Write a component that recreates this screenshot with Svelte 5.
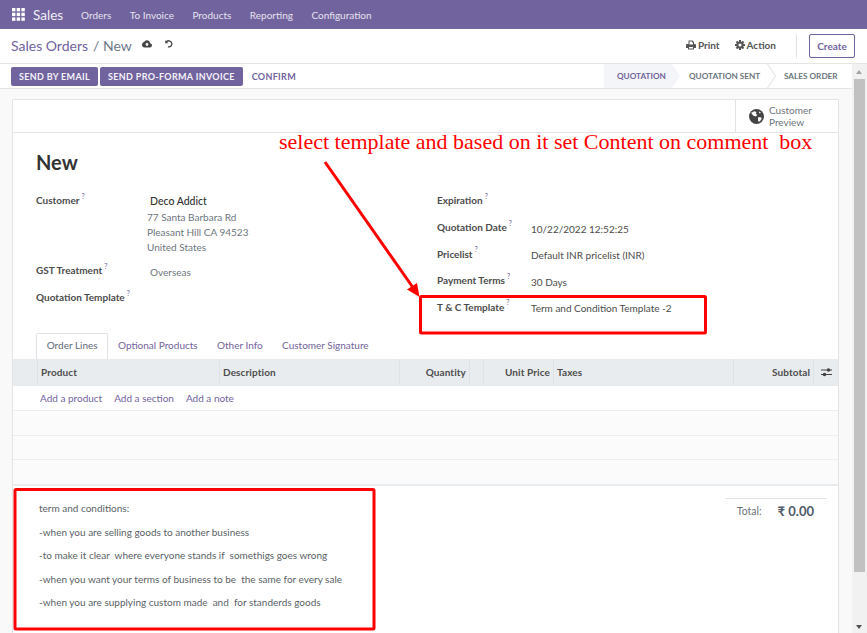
<script>
  const menu = ['Orders', 'To Invoice', 'Products', 'Reporting', 'Configuration'];
  const tabs = ['Order Lines', 'Optional Products', 'Other Info', 'Customer Signature'];
  const notes = [
    'term and conditions:',
    '-when you are selling goods to another business',
    '-to make it clear  where everyone stands if  somethigs goes wrong',
    '-when you want your terms of business to be  the same for every sale',
    '-when you are supplying custom made  and  for standerds goods'
  ];
  const teeth = [0, 45, 90, 135, 180, 225, 270, 315];
</script>

<div class="page">
  <header class="navbar">
    <svg class="apps" width="13" height="13" viewBox="0 0 13 13" fill="#fff">
      {#each [0, 4.7, 9.4] as y}
        {#each [0, 4.7, 9.4] as x}
          <rect {x} {y} width="3.4" height="3.4" />
        {/each}
      {/each}
    </svg>
    <span class="brand">Sales</span>
    {#each menu as item}
      <span class="menu-item">{item}</span>
    {/each}
  </header>

  <div class="control">
    <div class="crumbs">
      <span class="crumb-link">Sales Orders</span>
      <span class="crumb-sep">/ New</span>
      <svg class="save" width="10" height="8" viewBox="0 0 20 16">
        <path fill="#444" d="M16.2 6.6C15.7 2.9 13 0.5 10 0.5 7.500 0.5 5.400 2 4.500 4.200 2 4.600 0 6.800 0 9.500 0 12.700 2.300 15 5 15h11c2.300 0 4-1.900 4-4.300 0-2.200-1.600-3.900-3.800-4.100zM11.500 9v3h-3V9H6l4-4.200L14 9z" />
      </svg>
      <svg class="undo" width="9" height="9" viewBox="0 0 18 18" fill="none" stroke="#444" stroke-width="2.600">
        <path d="M4 7.500A6 6 0 1 1 8 15.500" />
        <path d="M2.500 2.500v6h6" fill="#444" stroke="none" />
      </svg>
    </div>
    <div class="actions">
      <span class="action">
        <svg width="10" height="10" viewBox="0 0 20 20">
          <path fill="#555" d="M5 1h8l3 3v4h2a2 2 0 0 1 2 2v6h-4v3H4v-3H0v-6a2 2 0 0 1 2-2h3zm2 2v6h7V5h-2V3zM6 14v3h8v-3z" fill-rule="evenodd" />
        </svg>
        Print
      </span>
      <span class="action">
        <svg width="10" height="10" viewBox="0 0 20 20" fill="#555">
          {#each teeth as a}
            <rect x="8" y="0" width="4" height="5" transform="rotate({a} 10 10)" />
          {/each}
          <circle cx="10" cy="10" r="5.200" fill="none" stroke="#555" stroke-width="4" />
        </svg>
        Action
      </span>
      <span class="divider"></span>
      <span class="create">Create</span>
    </div>
  </div>

  <div class="body">
    <div class="scroll">
      <div class="statusbar">
        <div class="buttons">
          <span class="btn">SEND BY EMAIL</span>
          <span class="btn">SEND PRO-FORMA INVOICE</span>
          <span class="btn-plain">CONFIRM</span>
        </div>
        <div class="stages">
          <span class="stage active">QUOTATION</span>
          <span class="stage second">
            QUOTATION SENT
            <svg class="chevron" width="9" height="24" viewBox="0 0 9 24" fill="none" stroke="#dcdfe3">
              <path d="M0.500 0L8.500 12 0.500 24" />
            </svg>
          </span>
          <span class="stage third">SALES ORDER</span>
        </div>
      </div>

      <div class="sheet">
        <div class="button-box">
          <div class="preview">
            <svg width="15" height="15" viewBox="0 0 20 20">
              <circle cx="10" cy="10" r="10" fill="#444" />
              <path fill="#fff" d="M3 5l4-2 3 1-1 2 2 2-2 2-3-1-2-2zM12 11l4 0 1 2-3 4-2-1zM13 3l3 2-2 1z" />
            </svg>
            <span>Customer<br />Preview</span>
          </div>
        </div>

        <h1 class="title">New</h1>

        <div class="groups">
          <div class="group left">
            <div class="row r-customer">
              <span class="label">Customer<sup>?</sup></span>
              <div class="value">
                <strong class="partner">Deco Addict</strong>
                <div class="address">77 Santa Barbara Rd<br />Pleasant Hill CA 94523<br />United States</div>
              </div>
            </div>
            <div class="row r-gst">
              <span class="label">GST Treatment<sup>?</sup></span>
              <span class="value indent muted">Overseas</span>
            </div>
            <div class="row r-template">
              <span class="label">Quotation Template<sup>?</sup></span>
            </div>
          </div>
          <div class="group right">
            <div class="row r-exp"><span class="label">Expiration<sup>?</sup></span></div>
            <div class="row r-std"><span class="label">Quotation Date<sup>?</sup></span><span class="value dn">10/22/2022 12:52:25</span></div>
            <div class="row r-std"><span class="label">Pricelist<sup>?</sup></span><span class="value dn">Default INR pricelist (INR)</span></div>
            <div class="row r-std"><span class="label">Payment Terms<sup>?</sup></span><span class="value dn">30 Days</span></div>
            <div class="row r-std"><span class="label">T &amp; C Template<sup>?</sup></span><span class="value dn">Term and Condition Template -2</span></div>
          </div>
        </div>

        <div class="tabs">
          {#each tabs as tab, i}
            <span class="tab" class:current={i === 0}>{tab}</span>
          {/each}
        </div>

        <div class="thead">
          <span class="c-handle"></span>
          <span class="c-product">Product</span>
          <span class="c-desc">Description</span>
          <span class="c-qty">Quantity</span>
          <span class="c-gap"></span>
          <span class="c-price">Unit Price</span>
          <span class="c-taxes">Taxes</span>
          <span class="c-sub">Subtotal</span>
          <span class="c-opt">
            <svg width="11" height="9" viewBox="0 0 11 9" fill="#444">
              <rect x="0" y="1.500" width="11" height="1" />
              <rect x="0" y="6" width="11" height="1" />
              <circle cx="7.500" cy="2" r="1.800" />
              <circle cx="3.500" cy="6.500" r="1.800" />
            </svg>
          </span>
        </div>
        <div class="add-row">
          <span>Add a product</span><span>Add a section</span><span>Add a note</span>
        </div>
        <div class="empty-row"></div>
        <div class="empty-row"></div>
        <div class="empty-row last"></div>

        <div class="bottom">
          <div class="note">
            {#each notes as line}
              <p>{line}</p>
            {/each}
          </div>
          <div class="totals">
            <span class="total-label">Total:</span>
            <span class="total-value">₹ 0.00</span>
          </div>
        </div>
      </div>
    </div>

    <div class="scrollbar">
      <span class="arrow up"></span>
      <div class="thumb"></div>
      <span class="arrow down"></span>
    </div>
  </div>

  <span class="callout">select template and based on it set Content on comment  box</span>
  <svg class="overlay" width="867" height="633" viewBox="0 0 867 633" fill="none" stroke="#f00">
    <path d="M325 162L414 289" stroke-width="3" />
    <path d="M419.500 297L407 289.500 417 283z" fill="#f00" stroke="none" />
    <rect x="420.500" y="296.500" width="285" height="36.500" rx="1" stroke-width="3" />
    <rect x="15" y="489.500" width="359" height="139.500" rx="1" stroke-width="3" />
  </svg>
</div>

<style>
  :global(body) {
    margin: 0;
  }

  .page {
    position: relative;
    width: 867px;
    height: 633px;
    overflow: hidden;
    display: flex;
    flex-direction: column;
    background: #fff;
    color: #4c4c4c;
    font-family: Lato, "Noto Sans", sans-serif;
    font-size: 10px;
  }

  .navbar {
    flex: none;
    height: 29px;
    box-sizing: border-box;
    display: flex;
    align-items: center;
    padding-left: 12px;
    background: #71639e;
    color: #fff;
  }

  .apps {
    margin-right: 8px;
  }

  .brand {
    font-size: 13.500px;
    margin-right: 18px;
    color: #f0eef6;
  }

  .menu-item {
    margin-right: 18.500px;
    font-size: 10px;
    color: #e6e3ef;
  }

  .control {
    flex: none;
    height: 35px;
    box-sizing: border-box;
    display: flex;
    justify-content: space-between;
    align-items: center;
    padding: 0 12px 0 11px;
    border-bottom: 1px solid #e4e4e4;
  }

  .crumbs {
    display: flex;
    align-items: center;
    font-size: 14px;
    padding-bottom: 2px;
  }

  .crumb-link {
    color: #71639e;
  }

  .crumb-sep {
    margin-left: 5px;
    color: #6c7a8a;
  }

  .save {
    margin-left: 10px;
    margin-bottom: 3px;
  }

  .undo {
    margin-left: 12px;
    margin-bottom: 3px;
  }

  .actions {
    display: flex;
    align-items: center;
  }

  .action {
    display: flex;
    align-items: center;
    gap: 2px;
    margin-right: 15px;
    font-weight: 700;
    font-size: 10px;
    color: #555;
    padding-bottom: 2px;
  }

  .divider {
    width: 1px;
    height: 24px;
    background: #e2e2e2;
    margin: 0 12px 0 5px;
  }

  .create {
    box-sizing: border-box;
    width: 46px;
    height: 24px;
    display: flex;
    align-items: center;
    justify-content: center;
    border: 1px solid #71639e;
    border-radius: 2px;
    color: #71639e;
    font-weight: 700;
    font-size: 10px;
  }

  .body {
    flex: 1;
    min-height: 0;
    display: flex;
  }

  .scroll {
    flex: none;
    width: 852px;
    background: #f9f9fa;
    overflow: hidden;
  }

  .statusbar {
    height: 25px;
    box-sizing: border-box;
    display: flex;
    justify-content: space-between;
    background: #fff;
    border-bottom: 1px solid #e4e4e4;
  }

  .buttons {
    display: flex;
    align-items: center;
    gap: 2px;
    padding-left: 11px;
  }

  .btn {
    height: 19px;
    display: flex;
    align-items: center;
    padding: 0 8px;
    background: #71639e;
    color: #f4f2f8;
    border-radius: 2px;
    font-size: 9px;
    font-weight: 700;
    letter-spacing: 0.33px;
  }

  .btn-plain {
    margin-left: -1px;
    padding: 0 8px;
    color: #71639e;
    font-size: 9px;
    font-weight: 700;
    letter-spacing: 0.33px;
  }

  .stages {
    display: flex;
    width: 248px;
    font-size: 8.200px;
    font-weight: 700;
    color: #6c757d;
    white-space: nowrap;
  }

  .stage {
    display: flex;
    align-items: center;
    position: relative;
    box-sizing: border-box;
  }

  .active {
    width: 76px;
    padding-left: 13px;
    background: #f4f5f8;
    color: #71639e;
    clip-path: polygon(0 0, 68px 0, 76px 50%, 68px 100%, 0 100%);
  }

  .second {
    width: 96px;
    padding-left: 9px;
  }

  .chevron {
    position: absolute;
    right: 0;
    top: 0;
  }

  .third {
    padding-left: 8px;
  }

  .sheet {
    box-sizing: border-box;
    margin: 10px 13px 0 12px;
    background: #fff;
    border: 1px solid #e4e4e4;
    border-bottom: 0;
    height: 600px;
  }

  .button-box {
    height: 33px;
    box-sizing: border-box;
    display: flex;
    justify-content: flex-end;
    border-bottom: 1px solid #e4e4e4;
  }

  .preview {
    width: 103px;
    box-sizing: border-box;
    display: flex;
    align-items: center;
    gap: 5px;
    padding-left: 13px;
    padding-top: 1px;
    border-left: 1px solid #e4e4e4;
    line-height: 11.500px;
    font-size: 10px;
    color: #6c757d;
  }

  .title {
    margin: 0;
    padding: 17px 0 0 23px;
    height: 35px;
    font-size: 20px;
    line-height: 24px;
    font-weight: 700;
    color: #333;
  }

  .groups {
    display: grid;
    grid-template-columns: 401px 1fr;
    padding: 9px 0 0 23px;
    height: 139px;
  }

  .group {
    display: flex;
    flex-direction: column;
  }

  .row {
    display: flex;
  }

  .left .label {
    width: 111px;
    flex: none;
  }

  .right .label {
    width: 94px;
    flex: none;
  }

  .label {
    font-weight: 700;
    font-size: 10px;
    color: #4c4c4c;
    line-height: 13px;
  }

  sup {
    font-size: 7px;
    font-weight: 400;
    line-height: 0;
    margin-left: 2px;
    color: #71639e;
    position: relative;
    top: -1px;
    vertical-align: super;
  }

  .value {
    line-height: 15px;
  }

  .partner {
    display: block;
    margin-left: 3px;
    font-weight: 500;
    color: #333;
    font-size: 10.500px;
    line-height: 15px;
  }

  .address {
    margin-top: 1px;
    color: #6c757d;
    line-height: 15px;
  }

  .r-customer {
    height: 70px;
  }

  .r-gst {
    height: 27px;
  }

  .indent {
    margin-left: 3px;
    position: relative;
    top: 1px;
  }

  .muted {
    color: #6c757d;
  }

  .r-exp {
    height: 27px;
  }

  .r-std {
    height: 26.500px;
  }

  .dn {
    position: relative;
    top: 0.500px;
    color: #4c4c4c;
  }

  .tabs {
    display: flex;
    align-items: flex-end;
    height: 26px;
    padding-left: 23px;
    box-sizing: border-box;
  }

  .tab {
    height: 26px;
    display: flex;
    align-items: center;
    padding: 0 9.700px 3px;
    color: #71639e;
    font-size: 10px;
    box-sizing: border-box;
  }

  .current {
    color: #5f6b78;
    border: 1px solid #dee2e6;
    border-bottom: 0;
    border-radius: 2px 2px 0 0;
    background: #fff;
  }

  .thead {
    display: flex;
    height: 27px;
    padding-bottom: 1px;
    box-sizing: border-box;
    background: #e9ecef;
    font-weight: 700;
    font-size: 10px;
    letter-spacing: 0.1px;
    color: #4c4c4c;
  }

  .thead span {
    box-sizing: border-box;
    display: flex;
    align-items: center;
    border-right: 1px solid #dfe3e7;
    padding: 0 3px;
  }

  .c-handle { width: 25px; }
  .c-product { width: 182px; }
  .c-desc { width: 180px; }
  .c-qty { width: 70px; justify-content: flex-end; }
  .c-gap { width: 14px; }
  .c-price { width: 70px; justify-content: flex-end; }
  .c-taxes { width: 180px; }
  .c-sub { width: 80px; justify-content: flex-end; }
  .thead .c-opt { flex: 1; border: 0; justify-content: center; }

  .add-row {
    height: 25px;
    box-sizing: border-box;
    display: flex;
    align-items: center;
    gap: 12px;
    padding-left: 27px;
    border-bottom: 1px solid #eceef0;
    color: #71639e;
    font-size: 10px;
  }

  .empty-row {
    height: 24.500px;
    box-sizing: border-box;
    background: #fbfbfb;
    border-bottom: 1px solid #eceef0;
  }

  .last {
    height: 26px;
    border-bottom: 2px solid #e9ecef;
  }

  .bottom {
    display: flex;
    justify-content: space-between;
  }

  .note {
    padding: 15px 0 0 26px;
    font-size: 10px;
    color: #5a5f66;
  }

  .note p {
    margin: 0 0 8.500px;
    line-height: 15px;
    white-space: pre;
  }

  .totals {
    box-sizing: border-box;
    width: 102px;
    height: 25px;
    margin: 12px 11px 0 0;
    border-top: 1px solid #e1e5e9;
    display: flex;
    align-items: center;
    justify-content: flex-end;
    gap: 16px;
    padding-right: 13px;
  }

  .total-label {
    color: #6c757d;
    font-size: 10.500px;
  }

  .total-value {
    font-weight: 700;
    font-size: 13px;
    color: #4f5a68;
  }

  .scrollbar {
    flex: 1;
    position: relative;
    background: #f1f1f1;
  }

  .thumb {
    position: absolute;
    left: 2px;
    right: 2px;
    top: 15px;
    height: 493px;
    background: #c1c1c1;
  }

  .arrow {
    position: absolute;
    left: 4px;
    width: 0;
    height: 0;
    border-left: 3.500px solid transparent;
    border-right: 3.500px solid transparent;
  }

  .up {
    top: 6px;
    border-bottom: 4px solid #a3a3a3;
  }

  .down {
    bottom: 4px;
    border-top: 4px solid #505050;
  }

  .callout {
    position: absolute;
    left: 279px;
    top: 129px;
    font-family: "Liberation Serif", serif;
    font-size: 22px;
    line-height: 25px;
    color: #f00;
    white-space: pre;
  }

  .overlay {
    position: absolute;
    left: 0;
    top: 0;
    pointer-events: none;
  }
</style>
